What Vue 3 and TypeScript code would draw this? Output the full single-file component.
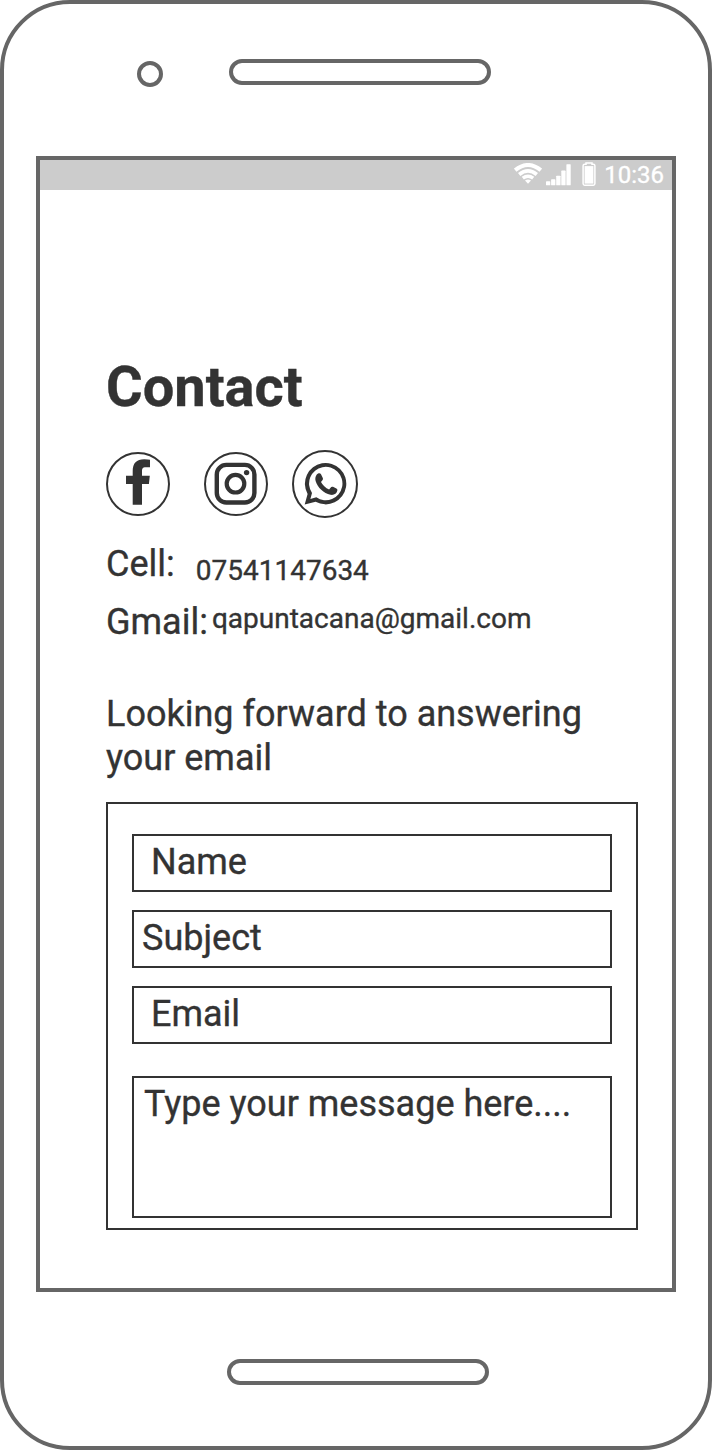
<script setup lang="ts">
interface Field {
  id: string
  label: string
}

const fields: Field[] = [
  { id: 'name', label: 'Name' },
  { id: 'subject', label: 'Subject' },
  { id: 'email', label: 'Email' },
  { id: 'message', label: 'Type your message here....' },
]
</script>

<template>
  <div class="phone">
    <div class="top">
      <span class="camera"></span>
      <span class="slot speaker"></span>
    </div>

    <div class="screen">
      <div class="status">
        <svg class="wifi" width="28" height="22" viewBox="0 0 28 22" fill="none" stroke="#fff">
          <path d="M1.2 7.2 Q14 -3.2 26.8 7.2" stroke-width="4" />
          <path d="M5.2 11.4 Q14 4.4 22.8 11.4" stroke-width="3.8" />
          <path d="M8.8 15.2 Q14 11.2 19.2 15.2" stroke-width="3.4" />
          <path d="M11 17.6 Q14 15.2 17 17.6 L14 20.8Z" fill="#fff" stroke="none" />
        </svg>
        <svg class="signal" width="25" height="22" viewBox="0 0 25 22" fill="#fff">
          <rect x="0" y="17.2" width="4.3" height="4.1" rx=".6" />
          <rect x="5.1" y="15.3" width="4.3" height="6" rx=".6" />
          <rect x="10.2" y="11.7" width="4.3" height="9.6" rx=".6" />
          <rect x="15.3" y="6.6" width="4.3" height="14.7" rx=".6" />
          <rect x="20.4" y="0.2" width="4.3" height="21.1" rx=".6" />
        </svg>
        <svg class="battery" width="14" height="24" viewBox="0 0 14 24">
          <path d="M4 2.2V.9h6v1.3h1.3q1.6 0 1.6 1.6v17.8q0 1.6-1.6 1.6H2.7q-1.6 0-1.6-1.6V3.8q0-1.6 1.6-1.6Z" fill="none" stroke="#fff" stroke-width="1.5" />
          <rect x="2.6" y="4.1" width="8.8" height="17.5" fill="#fff" />
        </svg>
        <span class="time">10:36</span>
      </div>

      <main class="content">
        <h1>Contact</h1>

        <div class="socials">
          <svg width="64" height="64" viewBox="0 0 64 64">
            <circle cx="32" cy="32" r="31" fill="none" stroke="#333" stroke-width="2" />
            <path d="M26.7 52.7V32.1H20V23.7H26.7V19.2C26.7 11 30.5 7.2 38.2 7.2Q42 7.2 44 7.7V15.3H39.8C36.6 15.3 36 16.8 36 19.4V23.7H43.8L42.9 32.1H36V52.7Z" fill="#333" />
          </svg>
          <svg class="instagram" width="64" height="64" viewBox="0 0 64 64" fill="none" stroke="#333">
            <circle cx="32" cy="32" r="31" stroke-width="2" />
            <rect x="12.8" y="12.9" width="37.6" height="37.6" rx="9.5" stroke-width="4.4" />
            <circle cx="31.5" cy="31.7" r="8.8" stroke-width="4.2" />
            <circle cx="42.6" cy="20.6" r="2.7" fill="#333" stroke="none" />
          </svg>
          <svg class="whatsapp" width="66" height="68" viewBox="0 0 66 68">
            <ellipse cx="33" cy="34" rx="32" ry="33" fill="none" stroke="#333" stroke-width="2" />
            <path fill="#333" fill-rule="evenodd" d="M12.7 54.6L15.6 43.9A20.7 20.7 0 1 1 23.6 51.8ZM18.4 48.9L24.3 47.3A16.7 16.7 0 1 0 20 43Z" />
            <path fill="#333" d="M26.6 23.3Q28.3 23 29 24.2L30.8 28.1Q31.3 29.2 30.6 30L29 32Q31.7 37.1 37.1 39.5L39.2 37.1Q40 36.4 41 36.8L44.4 38.4Q45.6 39 45.4 40.3C44.9 43.7 41.7 45.5 38.4 44.8C31.8 43.4 25.5 37.4 23.7 31.2C22.7 27.7 24.2 24.1 26.6 23.3Z" />
          </svg>
        </div>

        <div class="row cell">
          <span>Cell:</span>
          <span class="value">07541147634</span>
        </div>
        <div class="row gmail">
          <span>Gmail:</span>
          <span class="value">qapuntacana@gmail.com</span>
        </div>

        <p class="intro">Looking forward to answering<br />your email</p>

        <section class="form">
          <div v-for="field in fields" :key="field.id" class="field" :class="field.id">
            {{ field.label }}
          </div>
        </section>
      </main>
    </div>

    <span class="slot home"></span>
  </div>
</template>

<style>
body {
  margin: 0;
  background: #fff;
}
</style>

<style scoped>
.phone,
.phone * {
  box-sizing: border-box;
}

.phone {
  width: 712px;
  height: 1450px;
  border: 4px solid #666;
  border-radius: 70px;
  display: flex;
  flex-direction: column;
  overflow: hidden;
  background: #fff;
  color: #333;
  font-family: Roboto, sans-serif;
  font-size: 36px;
  line-height: 44px;
  -webkit-text-stroke: 0.35px currentColor;
}

.top {
  height: 152px;
  padding: 55px 0 0 133px;
  display: flex;
  align-items: flex-start;
}

.camera {
  width: 26px;
  height: 26px;
  margin-top: 2px;
  border: 4px solid #666;
  border-radius: 50%;
}

.slot {
  width: 262px;
  height: 26px;
  border: 4px solid #666;
  border-radius: 13px;
}

.speaker {
  margin-left: 66px;
}

.home {
  margin: 67px 0 0 223px;
}

.screen {
  width: 640px;
  height: 1136px;
  margin-left: 32px;
  border: 4px solid #666;
}

.status {
  height: 30px;
  padding: 2px 8px 0 0;
  display: flex;
  justify-content: flex-end;
  align-items: flex-start;
  background: #ccc;
  color: #fff;
}

.wifi {
  margin-top: 1px;
}

.signal {
  margin: 2px 0 0 4px;
}

.battery {
  margin-left: 11px;
}

.time {
  margin-left: 8px;
  font-size: 24px;
  line-height: 26px;
}

.content {
  padding: 163px 34px 0 66px;
}

h1 {
  margin: 0;
  height: 97px;
  font-size: 56px;
  line-height: 68px;
  font-weight: 700;
}

.socials {
  height: 68px;
  display: flex;
  align-items: center;
}

.instagram {
  margin-left: 34px;
}

.whatsapp {
  margin-left: 24px;
}

.row {
  display: flex;
  align-items: flex-start;
  height: 58px;
}

.cell {
  margin-top: 24px;
}

.value {
  font-size: 28px;
  line-height: 34px;
}

.cell .value {
  margin: 12px 0 0 21px;
}

.gmail .value {
  margin: 2px 0 0 4px;
}

.intro {
  margin: 34px 0 0;
  height: 110px;
}

.form {
  width: 532px;
  height: 428px;
  padding: 30px 24px 0;
  border: 2px solid #333;
  display: flex;
  flex-direction: column;
}

.field {
  height: 58px;
  padding: 4px 0 0 8px;
  margin-bottom: 18px;
  border: 2px solid #333;
}

.name,
.email {
  padding-left: 17px;
}

.message {
  height: 142px;
  margin: 14px 0 0;
  padding-left: 10px;
}
</style>
